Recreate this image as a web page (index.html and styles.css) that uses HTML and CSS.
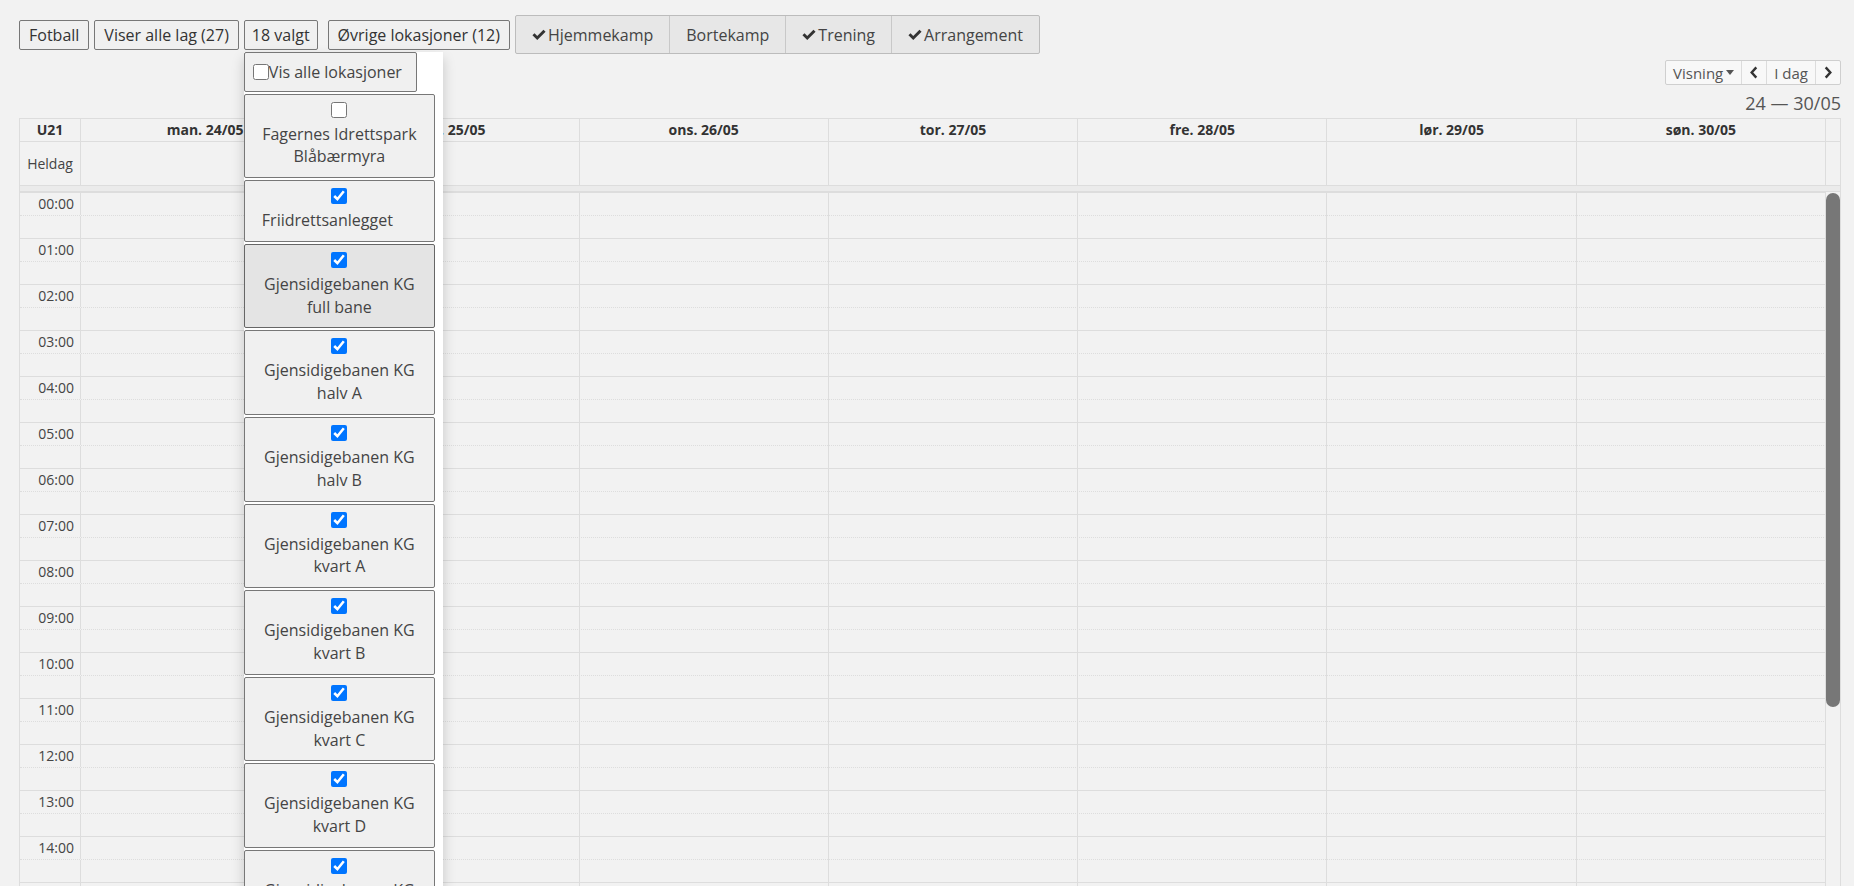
FILE: index.html
```html
<!DOCTYPE html>
<html lang="no">
<head>
  <meta charset="UTF-8" />
  <meta name="viewport" content="width=device-width, initial-scale=1.0"/>
  <title>Kalender</title>
  <link rel="stylesheet" href="styles.css">
</head>
<body>
<div class="page">
  <div class="toolbar">
    <button class="btn">Fotball</button>
    <button class="btn">Viser alle lag (27)</button>
    <div class="dd">
      <button class="btn btn-sm">18 valgt</button>
      <div class="dd-menu">
        <label class="dd-all"><input type="checkbox">Vis alle lokasjoner</label>
        <label class="dd-item"><input type="checkbox"><span>Fagernes Idrettspark Blåbærmyra</span></label>
        <label class="dd-item"><input type="checkbox" checked><span class="pad-r">Friidrettsanlegget</span></label>
        <label class="dd-item hover"><input type="checkbox" checked><span>Gjensidigebanen KG full bane</span></label>
        <label class="dd-item"><input type="checkbox" checked><span>Gjensidigebanen KG halv A</span></label>
        <label class="dd-item"><input type="checkbox" checked><span>Gjensidigebanen KG halv B</span></label>
        <label class="dd-item"><input type="checkbox" checked><span>Gjensidigebanen KG kvart A</span></label>
        <label class="dd-item"><input type="checkbox" checked><span>Gjensidigebanen KG kvart B</span></label>
        <label class="dd-item"><input type="checkbox" checked><span>Gjensidigebanen KG kvart C</span></label>
        <label class="dd-item"><input type="checkbox" checked><span>Gjensidigebanen KG kvart D</span></label>
        <label class="dd-item"><input type="checkbox" checked><span>Gjensidigebanen KG 7er</span></label>
      </div>
    </div>
    <button class="btn">Øvrige lokasjoner (12)</button>
    <div class="types">
      <button><svg class="chk" viewBox="0 0 16 13"><path d="M0.5 6.8 L2.9 4.4 L6 7.5 L13.1 0.4 L15.5 2.8 L6 12.3 Z"/></svg>Hjemmekamp</button>
      <button>Bortekamp</button>
      <button><svg class="chk" viewBox="0 0 16 13"><path d="M0.5 6.8 L2.9 4.4 L6 7.5 L13.1 0.4 L15.5 2.8 L6 12.3 Z"/></svg>Trening</button>
      <button><svg class="chk" viewBox="0 0 16 13"><path d="M0.5 6.8 L2.9 4.4 L6 7.5 L13.1 0.4 L15.5 2.8 L6 12.3 Z"/></svg>Arrangement</button>
    </div>
  </div>

  <div class="nav-row">
    <div class="nav">
      <button>Visning<svg class="caret" viewBox="0 0 8 5"><path d="M0 0h8L4 5z"/></svg></button>
      <button><svg class="chev" viewBox="0 0 10 14"><path d="M7.5 1.5 L2.5 7 L7.5 12.5"/></svg></button>
      <button>I dag</button>
      <button><svg class="chev" viewBox="0 0 10 14"><path d="M2.5 1.5 L7.5 7 L2.5 12.5"/></svg></button>
    </div>
  </div>
  <div class="range">24 — 30/05</div>

  <div class="cal">
    <div class="cal-head">
      <div class="hd">U21</div>
      <div class="hd">man. 24/05</div>
      <div class="hd">tir. 25/05</div>
      <div class="hd">ons. 26/05</div>
      <div class="hd">tor. 27/05</div>
      <div class="hd">fre. 28/05</div>
      <div class="hd">lør. 29/05</div>
      <div class="hd">søn. 30/05</div>
      <div class="hd gut"></div>
      <div class="ad">Heldag</div>
      <div class="ad"></div>
      <div class="ad"></div>
      <div class="ad"></div>
      <div class="ad"></div>
      <div class="ad"></div>
      <div class="ad"></div>
      <div class="ad"></div>
      <div class="ad gut"></div>
    </div>
    <div class="cal-div"></div>
    <div class="cal-body">
      <div class="slats">
        <div class="slat"><div class="t">00:00</div><div></div></div>
        <div class="slat minor"><div class="t"></div><div></div></div>
        <div class="slat"><div class="t">01:00</div><div></div></div>
        <div class="slat minor"><div class="t"></div><div></div></div>
        <div class="slat"><div class="t">02:00</div><div></div></div>
        <div class="slat minor"><div class="t"></div><div></div></div>
        <div class="slat"><div class="t">03:00</div><div></div></div>
        <div class="slat minor"><div class="t"></div><div></div></div>
        <div class="slat"><div class="t">04:00</div><div></div></div>
        <div class="slat minor"><div class="t"></div><div></div></div>
        <div class="slat"><div class="t">05:00</div><div></div></div>
        <div class="slat minor"><div class="t"></div><div></div></div>
        <div class="slat"><div class="t">06:00</div><div></div></div>
        <div class="slat minor"><div class="t"></div><div></div></div>
        <div class="slat"><div class="t">07:00</div><div></div></div>
        <div class="slat minor"><div class="t"></div><div></div></div>
        <div class="slat"><div class="t">08:00</div><div></div></div>
        <div class="slat minor"><div class="t"></div><div></div></div>
        <div class="slat"><div class="t">09:00</div><div></div></div>
        <div class="slat minor"><div class="t"></div><div></div></div>
        <div class="slat"><div class="t">10:00</div><div></div></div>
        <div class="slat minor"><div class="t"></div><div></div></div>
        <div class="slat"><div class="t">11:00</div><div></div></div>
        <div class="slat minor"><div class="t"></div><div></div></div>
        <div class="slat"><div class="t">12:00</div><div></div></div>
        <div class="slat minor"><div class="t"></div><div></div></div>
        <div class="slat"><div class="t">13:00</div><div></div></div>
        <div class="slat minor"><div class="t"></div><div></div></div>
        <div class="slat"><div class="t">14:00</div><div></div></div>
        <div class="slat minor"><div class="t"></div><div></div></div>
        <div class="slat"><div class="t">15:00</div><div></div></div>
        <div class="slat minor"><div class="t"></div><div></div></div>
        <div class="slat"><div class="t">16:00</div><div></div></div>
        <div class="slat minor"><div class="t"></div><div></div></div>
        <div class="cols">
          <div></div><div></div><div></div><div></div><div></div><div></div><div></div>
        </div>
      </div>
      <div class="vbar"><div class="thumb"></div></div>
    </div>
  </div>
</div>
</body>
</html>
```

FILE: styles.css
```css
html {
  overflow: hidden;
}
body {
  margin: 0;
  background: #f2f2f2;
  font-family: "Open Sans", Arial, sans-serif;
  color: #333;
}
.page {
  padding: 15px 13px 0 19px;
}
.toolbar {
  display: flex;
  align-items: center;
  gap: 5px;
  height: 39px;
}
.btn {
  font-family: inherit;
  font-size: 16px;
  color: #333;
  background: #f0f0f0;
  border: 1px solid #777;
  border-radius: 2px;
  height: 30px;
  padding: 0 9px;
}
.btn-sm {
  padding: 0 7px;
}
.dd {
  position: relative;
  margin-right: 5px;
}
.dd > .btn {
  display: block;
}
.dd-menu {
  position: absolute;
  top: calc(100% + 2px);
  left: 0;
  width: 199px;
  height: 900px;
  overflow: hidden;
  background: #fff;
  box-shadow: 0 6px 12px rgba(0, 0, 0, 0.18);
  display: flex;
  flex-direction: column;
  align-items: flex-start;
  gap: 2px;
  z-index: 10;
}
.dd-all {
  box-sizing: border-box;
  height: 40px;
  flex-shrink: 0;
  display: flex;
  align-items: center;
  padding: 0 14px 0 5px;
  border: 1px solid #777;
  border-radius: 2px;
  background: #f0f0f0;
  font-size: 16px;
  color: #444;
  white-space: nowrap;
}
.dd-all input {
  width: 16px;
  height: 16px;
  margin: 0 0 0 3px;
}
.dd-item {
  box-sizing: border-box;
  width: 191px;
  flex-shrink: 0;
  display: flex;
  flex-direction: column;
  align-items: center;
  padding: 7px 8px 9px;
  border: 1px solid #777;
  border-radius: 2px;
  background: #f0f0f0;
  font-size: 16px;
  line-height: 22.8px;
  color: #444;
  text-align: center;
}
.dd-item.hover {
  background: #e4e4e4;
  border-color: #666;
}
.dd-item input {
  width: 16px;
  height: 16px;
  margin: 0 0 5px;
}
.pad-r {
  padding-right: 24px;
}
.types {
  box-sizing: border-box;
  display: flex;
  height: 39px;
  border: 1px solid #bcbcbc;
  border-radius: 2px;
  background: #e7e7e7;
}
.types button {
  font-family: inherit;
  font-size: 16px;
  color: #444;
  background: none;
  border: 0;
  border-left: 1px solid #c8c8c8;
  padding: 0 16px;
  display: flex;
  align-items: center;
}
.types button:first-child {
  border-left: 0;
}
.chk {
  width: 14px;
  height: 12px;
  margin-right: 2px;
  fill: #333;
}
.nav-row {
  display: flex;
  justify-content: flex-end;
  margin-top: 6px;
}
.nav {
  box-sizing: border-box;
  display: flex;
  height: 25px;
  border: 1px solid #cfcfcf;
  border-radius: 2px;
  background: #f8f8f8;
}
.nav button {
  font-family: inherit;
  font-size: 15px;
  color: #555;
  background: none;
  border: 0;
  border-left: 1px solid #dcdcdc;
  padding: 0 7px;
  display: flex;
  align-items: center;
}
.nav button:first-child {
  border-left: 0;
}
.caret {
  width: 8px;
  height: 5px;
  margin-left: 3px;
  fill: #555;
}
.chev {
  width: 10px;
  height: 13px;
  fill: none;
  stroke: #333;
  stroke-width: 2.6;
}
.range {
  text-align: right;
  font-size: 18px;
  color: #555;
  padding-top: 3px;
  line-height: 30px;
}
.cal {
  border: 1px solid #ddd;
  border-bottom: 0;
}
.cal-head {
  display: grid;
  grid-template-columns: 61px repeat(7, 1fr) 14px;
}
.hd,
.ad {
  border-right: 1px solid #ddd;
  border-bottom: 1px solid #ddd;
  font-size: 14px;
  text-align: center;
}
.hd {
  height: 22px;
  line-height: 22px;
  font-weight: bold;
}
.ad {
  height: 43px;
  line-height: 43px;
  color: #444;
}
.gut {
  border-right: 0;
}
.cal-div {
  height: 5px;
  background: #ebebeb;
  border-bottom: 1px solid #ddd;
}
.cal-body {
  display: flex;
  height: 753px;
  overflow: hidden;
}
.slats {
  position: relative;
  flex: 1;
}
.vbar {
  width: 14px;
  flex-shrink: 0;
}
.thumb {
  height: 514px;
  margin-top: 1px;
  background: #777;
  border-radius: 7px;
}
.slat {
  box-sizing: border-box;
  display: grid;
  grid-template-columns: 61px 1fr;
  height: 23px;
  border-top: 1px solid #ddd;
}
.slat.minor {
  border-top-style: dotted;
}
.slat .t {
  border-right: 1px solid #ddd;
  text-align: right;
  padding-right: 6px;
  font-size: 14px;
  line-height: 22px;
  color: #444;
}
.cols {
  position: absolute;
  top: 0;
  bottom: 0;
  left: 61px;
  right: 0;
  display: grid;
  grid-template-columns: repeat(7, 1fr);
}
.cols div {
  border-right: 1px solid #ddd;
}
```
